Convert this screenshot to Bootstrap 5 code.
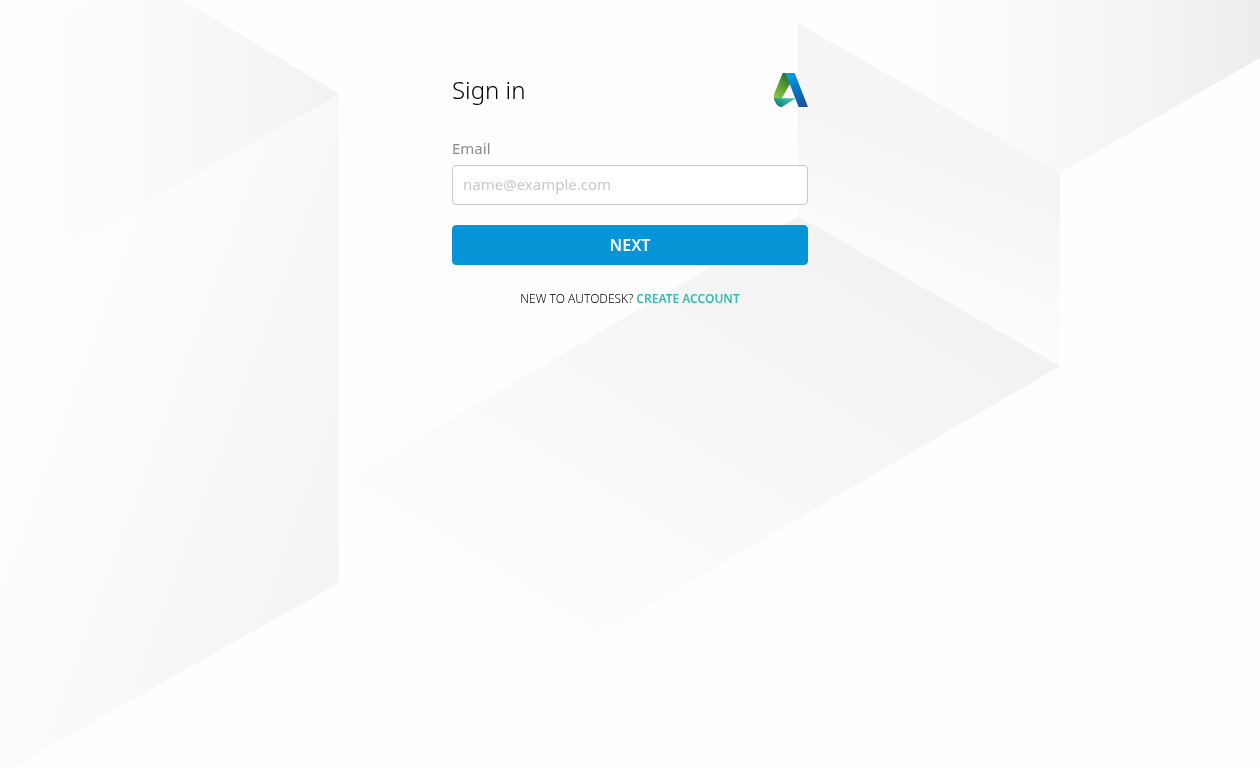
<!DOCTYPE html>
<html lang="en">
<head>
<meta charset="utf-8">
<meta name="viewport" content="width=device-width, initial-scale=1">
<title>Sign in</title>
<link href="https://cdn.jsdelivr.net/npm/bootstrap@5.3.0/dist/css/bootstrap.min.css" rel="stylesheet">
<style>
  body { background: #fefefe; color: #000; font-family: "Noto Sans", "Open Sans", sans-serif; }
  .backdrop { z-index: -1; }
  .signin { max-width: 380px; padding: 72px 12px 24px; }
  .signin h1 { font-size: 24px; line-height: 36px; font-weight: 300; }
  .signin .form-label { font-size: 15px; line-height: 20px; color: #8c8c8c; margin: 30px 0 7px; }
  .signin .form-control { height: 40px; padding: 0 10px 2px; font-size: 15px; background: #fff; border-color: #c8c8c8; border-radius: 4px; }
  .signin .form-control::placeholder { color: #c8c8c8; }
  .btn-next { --bs-btn-color: #fff; --bs-btn-bg: #0696d7; --bs-btn-border-color: #0696d7; --bs-btn-hover-color: #fff; --bs-btn-hover-bg: #0584be; height: 40px; margin-top: 20px; padding: 0; font-size: 16px; line-height: 24px; font-weight: 600; border-radius: 4px; }
  .register { margin-top: 24px; font-size: 12px; line-height: 20px; font-weight: 300; }
  .register a { color: #32bcad; font-weight: 600; }
</style>
</head>
<body>
<svg class="backdrop position-fixed top-0 start-0 w-100 h-100" viewBox="0 0 1260 768" preserveAspectRatio="xMidYMid slice" aria-hidden="true">
  <defs>
    <linearGradient id="roof" gradientUnits="userSpaceOnUse" x1="0" y1="0" x2="339" y2="0"><stop stop-color="#fefefe"/><stop offset=".3" stop-color="#fcfcfc"/><stop offset="1" stop-color="#f1f2f3"/></linearGradient>
    <linearGradient id="side" gradientUnits="userSpaceOnUse" x1="148" y1="53" x2="486" y2="176"><stop stop-color="#fefefe"/><stop offset="1" stop-color="#f4f4f5"/></linearGradient>
    <linearGradient id="wall" gradientUnits="userSpaceOnUse" x1="74" y1="-186" x2="19" y2="-47"><stop stop-color="#f5f5f5"/><stop offset="1" stop-color="#fdfdfd"/></linearGradient>
    <linearGradient id="floor" gradientUnits="userSpaceOnUse" x1="-123" y1="197" x2="130" y2="-208"><stop stop-color="#fdfdfd"/><stop offset=".5" stop-color="#f8f8f9"/><stop offset="1" stop-color="#f2f2f2"/></linearGradient>
    <linearGradient id="corner" gradientUnits="userSpaceOnUse" x1="900" y1="0" x2="1260" y2="0"><stop stop-color="#fefefe"/><stop offset=".45" stop-color="#f7f8f8"/><stop offset="1" stop-color="#ecedee"/></linearGradient>
  </defs>
  <path fill="url(#side)" d="M339 94V583L-10 780V200z"/>
  <path fill="url(#roof)" d="M177-4 339 94 76 243-10 195V52L98-4z"/>
  <path fill="url(#corner)" d="M760 0h500V58L1060 173 798 23z"/>
  <path fill="url(#wall)" d="M798 23 1060 173V366L798 216z"/>
  <path fill="url(#floor)" d="M798 216 1060 366 590 640 339 485z"/>
</svg>

<main class="signin container-fluid mx-auto">
  <header class="d-flex justify-content-between align-items-center">
    <h1 class="mb-0">Sign in</h1>
    <svg width="34" height="34" viewBox="0 0 102 102" role="img" aria-label="Autodesk">
      <defs>
        <linearGradient id="green" x1=".8" y1="0" x2=".2" y2="1"><stop stop-color="#256b32"/><stop offset=".5" stop-color="#5a9b35"/><stop offset="1" stop-color="#8bc53f"/></linearGradient>
        <linearGradient id="blue" x1=".2" y1="0" x2=".7" y2="1"><stop stop-color="#0a9fe0"/><stop offset=".45" stop-color="#0479c4"/><stop offset="1" stop-color="#1e4f9f"/></linearGradient>
        <linearGradient id="teal" x1="1" y1="0" x2="0" y2=".7"><stop stop-color="#4cc5b3"/><stop offset=".5" stop-color="#2ca99b"/><stop offset="1" stop-color="#087a78"/></linearGradient>
      </defs>
      <path fill="url(#green)" d="M26 0h15l9 29L22 78H0V64z"/>
      <path fill="url(#teal)" d="M0 76h65L25 101q-10 3-17-7L0 80z"/>
      <path fill="url(#blue)" d="M34 0h28l40 102H74z"/>
    </svg>
  </header>
  <form>
    <label class="form-label d-block" for="email">Email</label>
    <input class="form-control" type="email" id="email" placeholder="name@example.com">
    <button class="btn btn-next w-100" type="submit">NEXT</button>
  </form>
  <p class="register text-center mb-0">NEW TO AUTODESK? <a class="text-decoration-none" href="#">CREATE ACCOUNT</a></p>
</main>
<script src="https://cdn.jsdelivr.net/npm/bootstrap@5.3.0/dist/js/bootstrap.bundle.min.js"></script>
</body>
</html>
